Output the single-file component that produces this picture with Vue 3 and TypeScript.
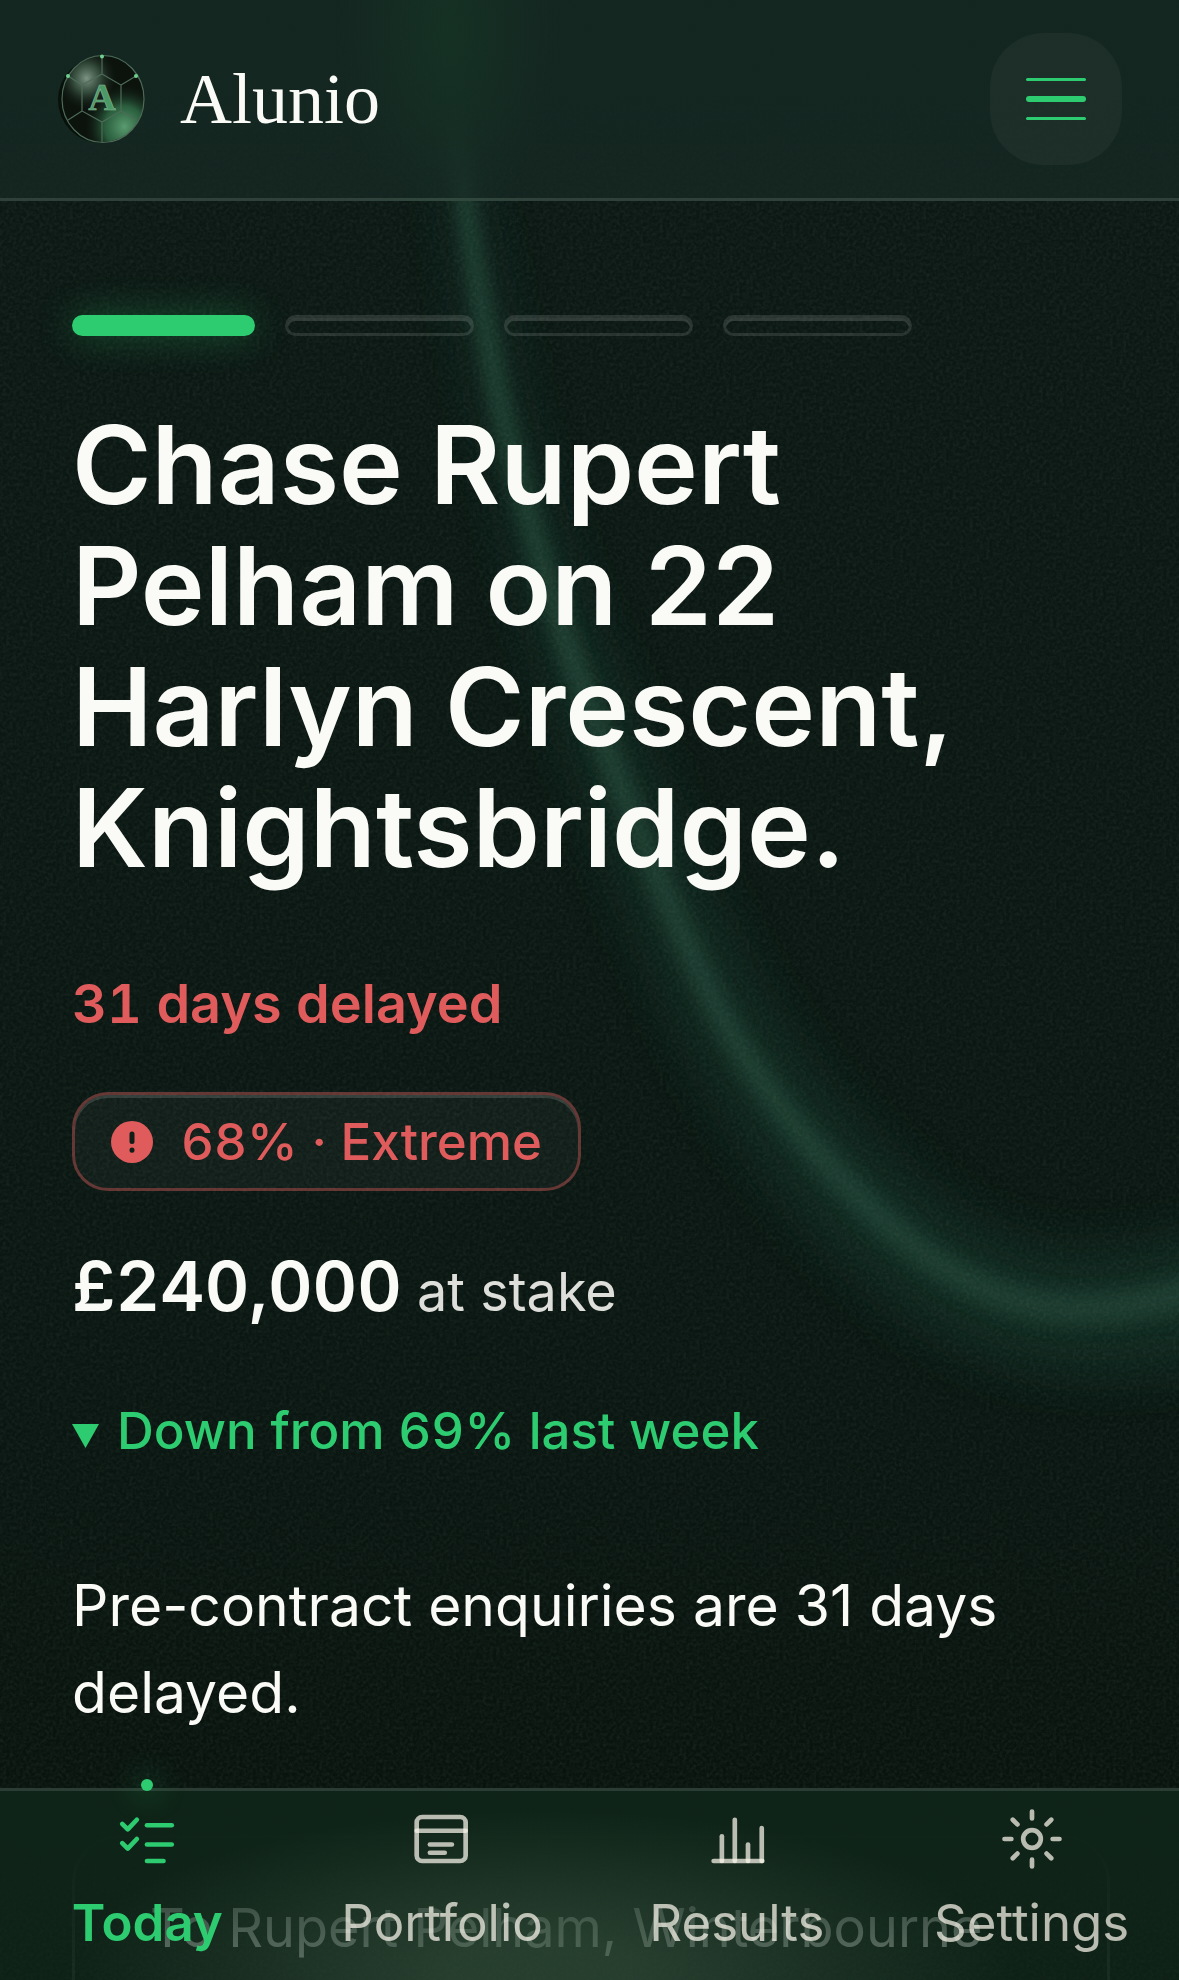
<script setup lang="ts">
import { ref } from 'vue'

type IconName = 'today' | 'portfolio' | 'results' | 'settings'

const steps = [1, 2, 3, 4]
const currentStep = ref(1)

const tabs: { id: IconName; label: string }[] = [
  { id: 'today', label: 'Today' },
  { id: 'portfolio', label: 'Portfolio' },
  { id: 'results', label: 'Results' },
  { id: 'settings', label: 'Settings' },
]
const activeTab = ref<IconName>('today')
</script>

<template>
  <div class="screen">
    <svg class="backdrop" viewBox="0 0 1179 1980" preserveAspectRatio="xMidYMin slice" aria-hidden="true">
      <defs>
        <linearGradient id="coreFade" gradientUnits="userSpaceOnUse" x1="0" y1="0" x2="0" y2="1300">
          <stop offset="0" stop-color="#2c5845" /><stop offset="0.4" stop-color="#2a5341" /><stop offset="1" stop-color="#2a5040" stop-opacity="0.7" />
        </linearGradient>
        <filter id="soft" x="-20%" y="-20%" width="140%" height="140%"><feGaussianBlur stdDeviation="24" /></filter>
        <filter id="fine" x="-20%" y="-20%" width="140%" height="140%"><feGaussianBlur stdDeviation="9" /></filter>
        <filter id="grain" x="0" y="0" width="100%" height="100%">
          <feTurbulence type="fractalNoise" baseFrequency="0.3" numOctaves="2" />
          <feColorMatrix values="0 0 0 0 0.4  0 0 0 0 0.6  0 0 0 0 0.5  0.6 0.6 0 0 -0.45" />
        </filter>
      </defs>
      <path class="ribbon-glow" filter="url(#soft)" d="M450 -60C463 120 490 250 520 400C540 480 570 570 605 648C650 755 700 880 760 990C815 1080 880 1155 955 1210C1000 1240 1040 1250 1080 1250C1130 1250 1170 1240 1260 1215V1360C1170 1372 1130 1378 1080 1376C1010 1374 950 1348 900 1310C810 1245 740 1150 685 1040C630 925 580 785 545 670C520 590 500 490 480 400C450 250 440 120 430 -60Z" />
      <path class="ribbon-core" filter="url(#fine)" d="M444 -60C455 120 478 250 507 400C528 490 554 580 581 658C625 772 673 898 730 1010C785 1105 859 1188 939 1248C988 1279 1032 1293 1080 1293C1130 1293 1170 1284 1260 1252V1292C1170 1316 1130 1325 1080 1325C1028 1325 980 1310 925 1272C842 1212 768 1124 713 1024C656 910 606 777 563 662C537 580 512 490 491 400C462 250 445 120 436 -60Z" />
      <rect width="1179" height="1980" filter="url(#grain)" opacity="0.16" />
    </svg>

    <header class="topbar">
      <a class="brand" href="#">
        <svg class="brand-mark" viewBox="0 0 90 90" aria-hidden="true">
          <defs>
            <radialGradient id="ballTop" cx="0.3" cy="0.26" r="0.36">
              <stop offset="0" stop-color="#7d9485" /><stop offset="0.45" stop-color="#3f5a48" stop-opacity="0.8" /><stop offset="1" stop-color="#122018" stop-opacity="0" />
            </radialGradient>
            <radialGradient id="ballLow" cx="0.76" cy="0.82" r="0.48">
              <stop offset="0" stop-color="#5a9c70" /><stop offset="0.5" stop-color="#2f6a45" stop-opacity="0.85" /><stop offset="1" stop-color="#122018" stop-opacity="0" />
            </radialGradient>
          </defs>
          <ellipse cx="44" cy="46" rx="43" ry="43" fill="#07100b" />
          <ellipse cx="46" cy="45" rx="41" ry="43" fill="#0c130d" />
          <ellipse cx="46" cy="45" rx="41" ry="43" fill="url(#ballTop)" />
          <ellipse cx="46" cy="45" rx="41" ry="43" fill="url(#ballLow)" />
          <g fill="none" stroke="#4e6b58" stroke-width="1.2">
            <ellipse cx="46" cy="45" rx="41" ry="43.5" />
            <path d="M45 20L64 31V57L45 68L25 57V31ZM45 20V2M64 31L79 22M64 57L79 66M45 68V88M25 57L11 66M25 31L11 22" />
          </g>
          <g fill="#6fd091"><circle cx="45" cy="2.5" r="2" /><circle cx="11" cy="22" r="2" /><circle cx="79" cy="22" r="2" /></g>
          <text x="45" y="56" text-anchor="middle" class="mark-letter">A</text>
        </svg>
        <span class="brand-name">Alunio</span>
      </a>
      <button class="menu" type="button" aria-label="Open menu">
        <span class="bar"></span><span class="bar bar-thick"></span><span class="bar"></span>
      </button>
    </header>

    <main class="content">
      <ol class="steps" aria-label="Progress">
        <li v-for="step in steps" :key="step" class="step" :class="{ current: step === currentStep }"></li>
      </ol>
      <h1 class="title">Chase Rupert Pelham on 22 Harlyn Crescent, Knightsbridge.</h1>
      <p class="delay">31 days delayed</p>
      <p class="risk">
        <svg class="risk-icon" viewBox="0 0 42 42" aria-hidden="true">
          <circle cx="21" cy="21" r="21" fill="#e05c5c" />
          <path d="M21 13V20.5M21 29V29.2" stroke="#111d17" stroke-width="5" stroke-linecap="round" />
        </svg>
        <span>68% · Extreme</span>
      </p>
      <p class="stake"><strong>£240,000</strong> <span>at stake</span></p>
      <p class="trend">
        <svg class="trend-icon" viewBox="0 0 27 24" aria-hidden="true"><path d="M0 0H27L13.5 24Z" fill="#2ecc71" /></svg>
        <span>Down from 69% last week</span>
      </p>
      <p class="summary">Pre-contract enquiries are 31 days delayed.</p>
      <section class="draft"><p>To Rupert Pelham, Winterbourne</p></section>
    </main>

    <nav class="tabbar" aria-label="Main">
      <a v-for="tab in tabs" :key="tab.id" class="tab" :class="{ active: tab.id === activeTab }" href="#" @click.prevent="activeTab = tab.id">
        <svg class="tab-icon" viewBox="0 0 24 24" aria-hidden="true">
          <g v-if="tab.id === 'today'">
            <path d="M3 6.5L5 8.5L8.3 5" /><path d="M3 13.5L5 15.5L8.3 12" />
            <path d="M12 7H21" /><path d="M12 14H21" /><path d="M12 20H18" />
          </g>
          <g v-else-if="tab.id === 'portfolio'">
            <rect x="2.8" y="4" width="17.8" height="16" rx="2" /><path d="M2.8 9H20.6" /><path d="M7.6 14H15.6" /><path d="M7.6 17H13" />
          </g>
          <g v-else-if="tab.id === 'results'">
            <path d="M3.5 20H21.2" /><path d="M6.5 20V11" /><path d="M11.2 20V5" /><path d="M16 20V14" /><path d="M21 20V8" />
          </g>
          <g v-else>
            <circle cx="12" cy="12" r="3.2" />
            <path d="M12 2V4.500M12 19.500V22M2 12H4.500M19.500 12H22M5 5L6.700 6.700M17.300 17.300L19 19M5 19L6.700 17.300M17.300 6.700L19 5" />
          </g>
        </svg>
        <span>{{ tab.label }}</span>
      </a>
    </nav>
  </div>
</template>

<style>
body {
  margin: 0;
  background: #0b1711;
}
</style>

<style scoped>
.screen {
  position: relative;
  height: 100vh;
  display: flex;
  flex-direction: column;
  overflow: hidden;
  box-sizing: border-box;
  background: linear-gradient(180deg, #0c1814 0%, #0a1611 70%, #09120d 100%);
  color: #fafaf7;
  font-family: Inter, "Liberation Sans", sans-serif;
}
.screen *,
.screen *::before {
  box-sizing: border-box;
}
.backdrop {
  position: absolute;
  inset: 0;
  width: 100%;
  height: 100%;
}
.ribbon-glow {
  fill: #174030;
  opacity: 0.42;
}
.ribbon-core {
  fill: url(#coreFade);
  opacity: 0.7;
}
.topbar {
  position: relative;
  display: flex;
  justify-content: space-between;
  align-items: center;
  flex: none;
  padding: 33px 57px;
  border-bottom: 3px solid rgba(250, 250, 247, 0.12);
  background:
    radial-gradient(ellipse 110px 200px at 38% 15%, rgba(22, 56, 38, 0.6), transparent),
    linear-gradient(180deg, rgba(20, 39, 33, 0.96) 50%, rgba(23, 41, 36, 0.72) 100%);
}
.brand {
  display: flex;
  align-items: center;
  gap: 33px;
  color: inherit;
  text-decoration: none;
}
.brand-mark {
  width: 90px;
  height: 90px;
}
.mark-letter {
  font: bold 38px "Liberation Serif", serif;
  fill: #4b9966;
  stroke: #8dbb9c;
  stroke-width: 0.6;
}
.brand-name {
  font-family: "Liberation Serif", serif;
  font-size: 72px;
  line-height: 78px;
}
.menu {
  display: flex;
  flex-direction: column;
  align-items: center;
  justify-content: center;
  gap: 15px;
  width: 132px;
  height: 132px;
  padding: 0;
  border: 0;
  border-radius: 54px;
  background: rgba(250, 250, 247, 0.04);
}
.bar {
  width: 60px;
  height: 3px;
  border-radius: 3px;
  background: #2ecc71;
}
.bar-thick {
  height: 6px;
}
.content {
  position: relative;
  flex: 1;
  min-height: 0;
  padding: 114px 69px 0 72px;
}
.content p {
  margin: 0;
}
.steps {
  display: flex;
  gap: 30px;
  max-width: 840px;
  margin: 0;
  padding: 0;
  list-style: none;
}
.step {
  flex: 1;
  height: 21px;
  border: 3px solid rgba(250, 250, 247, 0.12);
  border-radius: 12px;
  box-shadow: inset 0 3px rgba(250, 250, 247, 0.15);
}
.step.current {
  border: 0;
  background: #2ecc71;
  box-shadow: 0 0 36px rgba(46, 204, 113, 0.35);
}
.title {
  max-width: 960px;
  margin: 68px 0 0;
  font-size: 108px;
  font-weight: 600;
  line-height: 121px;
}
.content .delay {
  margin-top: 75px;
  color: #e05c5c;
  font-size: 54px;
  font-weight: 600;
  line-height: 81px;
  font-variant-numeric: tabular-nums;
}
.content .risk {
  display: flex;
  align-items: center;
  gap: 28px;
  width: fit-content;
  height: 99px;
  margin-top: 48px;
  padding: 0 36px;
  border: 3px solid rgba(224, 92, 92, 0.4);
  border-radius: 36px;
  background: rgba(250, 250, 247, 0.03);
  box-shadow: inset 0 3px rgba(250, 250, 247, 0.15);
  color: #e05c5c;
  font-size: 51px;
  font-weight: 500;
  line-height: 78px;
  font-variant-numeric: tabular-nums;
}
.risk-icon {
  width: 42px;
  height: 42px;
}
.content .stake {
  margin-top: 47px;
  color: #dededb;
  font-size: 54px;
  line-height: 96px;
}
.stake strong {
  color: #fafaf7;
  font-size: 69px;
  font-weight: 600;
  font-variant-numeric: tabular-nums;
}
.content .trend {
  display: flex;
  align-items: center;
  gap: 18px;
  margin-top: 52px;
  color: #2ecc71;
  font-size: 51px;
  font-weight: 500;
  line-height: 78px;
  font-variant-numeric: tabular-nums;
}
.trend-icon {
  width: 27px;
  height: 24px;
  margin-top: 9px;
}
.content .summary {
  margin-top: 92px;
  font-size: 57px;
  line-height: 87px;
}
.draft {
  margin-top: 99px;
  height: 240px;
  padding: 48px 75px;
  border: 3px solid rgba(250, 250, 247, 0.12);
  border-radius: 48px;
  color: #fafaf7;
  font-size: 54px;
  line-height: 84px;
  white-space: nowrap;
}
.tabbar {
  position: absolute;
  right: 0;
  bottom: 0;
  left: 0;
  display: flex;
  height: 192px;
  padding-top: 15px;
  border-top: 3px solid #2a3c33;
  background:
    radial-gradient(ellipse 40% 85% at 46% 95%, rgba(62, 90, 70, 0.5) 20%, transparent),
    linear-gradient(180deg, rgba(15, 36, 24, 0.97) 30%, rgba(17, 42, 28, 0.6) 100%);
}
.tab {
  position: relative;
  display: flex;
  flex: 1 1 0;
  min-width: 0;
  flex-direction: column;
  align-items: center;
  gap: 18px;
  color: rgba(250, 246, 234, 0.73);
  font-size: 51px;
  line-height: 66px;
  text-decoration: none;
}
.tab-icon {
  width: 66px;
  height: 66px;
  fill: none;
  stroke: currentColor;
  stroke-width: 1.7;
  stroke-linecap: round;
  stroke-linejoin: round;
}
.tab.active {
  color: #2ecc71;
  font-weight: 600;
}
.tab.active::before {
  content: "";
  position: absolute;
  top: -27px;
  width: 12px;
  height: 12px;
  border-radius: 50%;
  background: #2ecc71;
  box-shadow: 0 0 30px 3px rgba(46, 204, 113, 0.4);
}
</style>
